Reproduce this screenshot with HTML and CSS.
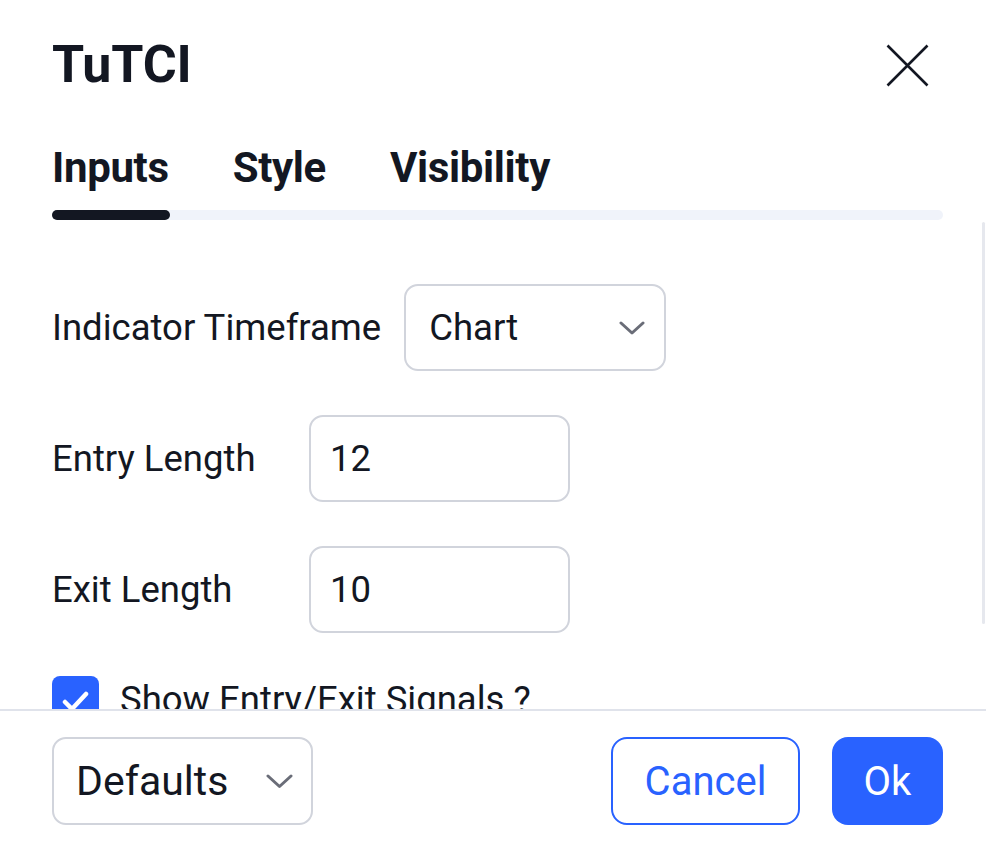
FILE: index.html
```html
<!DOCTYPE html>
<html lang="en">
<head>
<meta charset="utf-8">
<title>TuTCI</title>
<link rel="stylesheet" href="styles.css">
</head>
<body>
<div class="dialog">
  <header class="header">
    <h1 class="title">TuTCI</h1>
    <button class="close" aria-label="Close">
      <svg width="43" height="43" viewBox="0 0 43 43"><path d="M1.5 1.5L41.5 41.5M41.5 1.5L1.5 41.5" stroke="#131722" stroke-width="2.6" fill="none"/></svg>
    </button>
  </header>
  <nav class="tabs">
    <span class="tab">Inputs</span>
    <span class="tab">Style</span>
    <span class="tab">Visibility</span>
  </nav>
  <div class="tabbar"><div class="tabbar-active"></div></div>
  <main class="content">
    <div class="row">
      <label class="label label-wide">Indicator Timeframe</label>
      <div class="field select">
        <span>Chart</span>
        <svg class="chev" width="26" height="14" viewBox="0 0 26 14"><path d="M2 2L13 12L24 2" stroke="#6a6d78" stroke-width="3" fill="none" stroke-linecap="round" stroke-linejoin="round"/></svg>
      </div>
    </div>
    <div class="row">
      <label class="label">Entry Length</label>
      <div class="field input">12</div>
    </div>
    <div class="row">
      <label class="label">Exit Length</label>
      <div class="field input">10</div>
    </div>
    <div class="row check-row">
      <span class="checkbox">
        <svg width="47" height="47" viewBox="0 0 47 47"><path d="M13 26L20 33L34 18" stroke="#fff" stroke-width="4.5" fill="none" stroke-linecap="round" stroke-linejoin="round"/></svg>
      </span>
      <span class="check-label">Show Entry/Exit Signals ?</span>
    </div>
    <div class="scroll-thumb"></div>
  </main>
  <footer class="footer">
    <div class="field defaults">
      <span>Defaults</span>
      <svg class="chev" width="27" height="15" viewBox="0 0 27 15"><path d="M2 2L13.5 12.5L25 2" stroke="#6a6d78" stroke-width="3" fill="none" stroke-linecap="round" stroke-linejoin="round"/></svg>
    </div>
    <div class="actions">
      <button class="btn cancel">Cancel</button>
      <button class="btn ok">Ok</button>
    </div>
  </footer>
</div>
</body>
</html>
```

FILE: styles.css
```css
* { box-sizing: border-box; }
html, body { margin: 0; padding: 0; background: #fff; }
body {
  font-family: Roboto, "Liberation Sans", sans-serif;
  color: #131722;
}
.dialog {
  width: 986px;
  height: 842px;
  display: flex;
  flex-direction: column;
  overflow: hidden;
}
.header {
  display: flex;
  align-items: center;
  justify-content: space-between;
  padding: 35px 57px 0 52px;
}
.title {
  margin: 0;
  font-size: 52px;
  line-height: 60px;
  font-weight: 700;
  letter-spacing: -0.1px;
}
.close {
  border: 0;
  background: none;
  padding: 0;
  display: flex;
}
.tabs {
  display: flex;
  gap: 64px;
  padding: 0 52px;
  margin-top: 48px;
}
.tab {
  font-size: 42px;
  line-height: 50px;
  font-weight: 700;
  letter-spacing: -0.35px;
}
.tabbar {
  margin: 17px 43px 0 52px;
  height: 10px;
  border-radius: 5px;
  background: #f0f3fa;
}
.tabbar-active {
  width: 118px;
  height: 10px;
  border-radius: 5px;
  background: #131722;
}
.content {
  position: relative;
  height: 491px;
  overflow: hidden;
  padding: 64px 0 0 52px;
  display: flex;
  flex-direction: column;
  gap: 44px;
  border-bottom: 2px solid #e0e3eb;
  flex: none;
}
.row {
  display: flex;
  align-items: center;
}
.label {
  min-width: 235px;
  margin-right: 22px;
  font-size: 36.5px;
  line-height: 44px;
}
.label-wide {
  margin-right: 23px;
}
.field {
  width: 261px;
  height: 87px;
  border: 2px solid #d1d4dc;
  border-radius: 14px;
  display: flex;
  align-items: center;
  font-size: 36.5px;
}
.select {
  width: 262px;
  justify-content: space-between;
  padding: 0 19px 0 23px;
}
.input {
  padding-left: 19px;
}
.check-row {
  margin-top: -1px;
}
.checkbox {
  width: 47px;
  height: 47px;
  border-radius: 8px;
  background: #2962ff;
  display: flex;
  flex: none;
}
.check-label {
  margin-left: 21px;
  font-size: 36.5px;
  line-height: 44px;
}
.scroll-thumb {
  position: absolute;
  right: 1px;
  top: 2px;
  width: 3px;
  height: 402px;
  background: #e6e8ee;
  border-radius: 2px;
}
.footer {
  display: flex;
  justify-content: space-between;
  align-items: flex-start;
  padding: 26px 43px 0 52px;
}
.defaults {
  height: 88px;
  justify-content: space-between;
  padding: 0 18px 0 22px;
  font-size: 41px;
}
.actions {
  display: flex;
  gap: 32px;
}
.btn {
  height: 88px;
  border-radius: 16px;
  font-family: Roboto, "Liberation Sans", sans-serif;
  font-size: 40px;
  padding: 0;
  cursor: pointer;
}
.cancel {
  width: 189px;
  border: 2px solid #2962ff;
  background: #fff;
  color: #2962ff;
}
.ok {
  width: 111px;
  border: 0;
  background: #2962ff;
  color: #fff;
}
```
